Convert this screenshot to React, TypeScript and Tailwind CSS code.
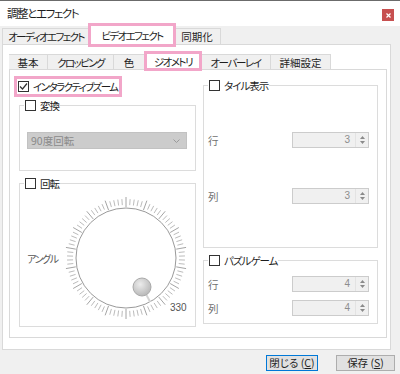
import React from "react";

const Checkbox = ({ checked = false }: { checked?: boolean }) => (
  <span className="w-[11px] h-[11px] shrink-0 border border-[#333333] bg-white flex items-center justify-center">
    {checked && (
      <svg width="9" height="9" viewBox="0 0 9 9">
        <path d="M1 4.5 L3.5 7 L8 1.5" fill="none" stroke="#333333" strokeWidth="1.2" />
      </svg>
    )}
  </span>
);

interface GroupProps {
  title: string;
  className?: string;
  children?: React.ReactNode;
}

const Group = ({ title, className = "", children }: GroupProps) => (
  <fieldset className={`border border-[#dcdcdc] p-0 m-0 min-w-0 ${className}`}>
    <legend className="ml-[4px] px-[1px] h-[11px] flex items-center gap-[4px] leading-[11px] whitespace-nowrap">
      <Checkbox />
      <span className="tracking-[-1px]">{title}</span>
    </legend>
    {children}
  </fieldset>
);

const SpinBox = ({ value }: { value: number }) => (
  <div className="w-[77px] h-[16px] border border-[#cccccc] bg-[#f0f0f0] flex">
    <span className="flex-1 text-right pr-[5px] text-[10px] leading-[14px] text-[#8d8d8d] font-['Liberation_Sans',sans-serif]">
      {value}
    </span>
    <span className="w-[13px] border-l border-[#e3e3e3] flex flex-col items-center justify-center gap-[2px]">
      <svg width="5" height="3" viewBox="0 0 5 3">
        <path d="M0 3 L2.5 0 L5 3 Z" fill="#8a8a8a" />
      </svg>
      <svg width="5" height="3" viewBox="0 0 5 3">
        <path d="M0 0 L2.5 3 L5 0 Z" fill="#8a8a8a" />
      </svg>
    </span>
  </div>
);

const SpinRow = ({ label, value, className = "" }: { label: string; value: number; className?: string }) => (
  <div className={`flex items-center justify-between pl-[4px] pr-[8px] ${className}`}>
    <span className="text-[#707070]">{label}</span>
    <SpinBox value={value} />
  </div>
);

const Dial = () => {
  const cx = 64;
  const cy = 64;
  const ticks = [];
  for (let i = 0; i < 90; i++) {
    const a = (i * 4 * Math.PI) / 180;
    const long = i % 5 === 0;
    const r1 = long ? 51 : 53;
    const r2 = long ? 61 : 59;
    ticks.push(
      <line
        key={i}
        x1={cx + r1 * Math.sin(a)}
        y1={cy - r1 * Math.cos(a)}
        x2={cx + r2 * Math.sin(a)}
        y2={cy - r2 * Math.cos(a)}
        stroke={long ? "#9a9a9a" : "#b3b3b3"}
        strokeWidth="0.9"
      />
    );
  }
  return (
    <svg width="128" height="128" viewBox="0 0 128 128" className="shrink-0">
      <defs>
        <radialGradient id="knob" cx="0.4" cy="0.35" r="0.7">
          <stop offset="0" stopColor="#ececec" />
          <stop offset="1" stopColor="#b5b5b5" />
        </radialGradient>
      </defs>
      {ticks}
      <circle cx={cx} cy={cy} r="50" fill="white" stroke="#9a9a9a" strokeWidth="1" />
      <line x1="84.4" y1="100.9" x2="88.2" y2="108" stroke="#d4d4d4" strokeWidth="2" />
      <circle cx="80" cy="93" r="9" fill="url(#knob)" stroke="#a9a9a9" strokeWidth="1" />
      <text x="108" y="117" fontSize="10" fill="#555555" fontFamily="Liberation Sans, sans-serif">
        330
      </text>
    </svg>
  );
};

const tab =
  "h-[15px] border border-b-0 border-l-0 border-[#d9d9d9] bg-[#f0f0f0] flex items-center justify-center whitespace-nowrap";

const App = () => {
  return (
    <div className="w-[400px] h-[374px] overflow-hidden bg-[#f0f0f0] flex flex-col text-[10.5px] leading-[13px] text-[#1e1e1e] font-['Noto_Sans_CJK_JP',sans-serif] [font-feature-settings:'palt']">
      {/* title bar */}
      <div className="h-[26px] shrink-0 bg-white border-t border-[#6b6b6b] flex items-center pl-[7px] pr-[6px]">
        <span className="text-[11.5px] leading-none tracking-[-1.4px] whitespace-nowrap">調整とエフェクト</span>
        <div className="ml-auto self-start mt-[8px] w-[12px] h-[12px] bg-[#c75050] flex items-center justify-center">
          <svg width="5" height="5" viewBox="0 0 5 5">
            <path d="M0.5 0.5 L4.5 4.5 M4.5 0.5 L0.5 4.5" stroke="white" strokeWidth="1.2" />
          </svg>
        </div>
      </div>

      {/* outer tabs */}
      <div className="h-[18px] shrink-0 flex items-end pl-[2px]">
        <div className="w-[88px] h-[16px] border border-b-0 border-[#d9d9d9] bg-[#f0f0f0] flex items-center justify-center whitespace-nowrap tracking-[-1.6px]">
          オーディオエフェクト
        </div>
        <div className="relative z-10 w-[84px] h-[20px] -mb-px bg-white border border-b-0 border-[#d9d9d9] outline-3 outline-[#f2a6c9] -outline-offset-1 flex items-center justify-center whitespace-nowrap tracking-[-1.6px]">
          ビデオエフェクト
        </div>
        <div className="w-[47px] h-[16px] border border-b-0 border-l-0 border-[#d9d9d9] bg-[#f0f0f0] flex items-center justify-center whitespace-nowrap">
          同期化
        </div>
      </div>

      {/* outer panel */}
      <div className="ml-[2px] w-[389px] h-[306px] shrink-0 border border-[#d9d9d9] bg-white pt-[8px] pl-[6px]">
        {/* inner tabs */}
        <div className="h-[16px] flex items-end">
          <div className={`w-[39px] border-l ${tab}`}>基本</div>
          <div className={`w-[66px] tracking-[-1.6px] ${tab}`}>クロッピング</div>
          <div className={`w-[31px] ${tab}`}>色</div>
          <div className="relative z-10 w-[56px] h-[18px] -mb-px bg-white border border-b-0 border-[#d9d9d9] outline-3 outline-[#f2a6c9] -outline-offset-2 flex items-center justify-center whitespace-nowrap tracking-[-1.6px]">
            ジオメトリ
          </div>
          <div className={`w-[70px] tracking-[-1.4px] ${tab}`}>オーバーレイ</div>
          <div className={`w-[60px] ${tab}`}>詳細設定</div>
        </div>

        {/* inner panel */}
        <div className="w-[378px] h-[269px] border border-[#d9d9d9] bg-white pl-[9px] grid grid-cols-[177px_175px] gap-x-[7px] items-start">
          {/* left column */}
          <div className="flex flex-col">
            <div className="relative z-10 mt-[9px] -ml-[2px] w-[102px] h-[15px] pl-[1px] flex items-center gap-[4px] outline-3 outline-[#f2a6c9] outline-offset-0 whitespace-nowrap">
              <Checkbox checked />
              <span className="tracking-[-1.6px]">インタラクティブズーム</span>
            </div>

            <Group title="変換" className="mt-[6px] h-[71px]">
              <div className="ml-[7px] mt-[21px] w-[160px] h-[17px] bg-[#cccccc] border border-[#c2c2c2] flex items-center pl-[3px] pr-[6px] text-[#8a8a8a] whitespace-nowrap">
                <span className="flex-1">90度回転</span>
                <svg width="7" height="4" viewBox="0 0 7 4">
                  <path d="M0.5 0.5 L3.5 3.5 L6.5 0.5" fill="none" stroke="#9a9a9a" strokeWidth="1" />
                </svg>
              </div>
            </Group>

            <Group title="回転" className="mt-[7px] h-[149px]">
              <div className="mt-[5px] flex items-center">
                <span className="ml-[7px] w-[35px] text-[10px] text-[#555555] whitespace-nowrap tracking-[-1.4px]">
                  アングル
                </span>
                <Dial />
              </div>
            </Group>
          </div>

          {/* right column */}
          <div className="flex flex-col">
            <Group title="タイル表示" className="mt-[10px] h-[168px]">
              <SpinRow label="行" value={3} className="mt-[41px]" />
              <SpinRow label="列" value={3} className="mt-[40px]" />
            </Group>

            <Group title="パズルゲーム" className="mt-[7px] h-[69px]">
              <SpinRow label="行" value={4} className="mt-[10px]" />
              <SpinRow label="列" value={4} className="mt-[8px]" />
            </Group>
          </div>
        </div>
      </div>

      {/* buttons */}
      <div className="flex-1 flex justify-end items-start pt-[5px] pr-[5px] gap-[18px]">
        <button className="w-[52px] h-[16px] border border-[#0078d7] bg-[#e1e1e1] flex items-center justify-center leading-none whitespace-nowrap">
          閉じる (<span className="underline">C</span>)
        </button>
        <button className="w-[59px] h-[16px] border border-[#adadad] bg-[#e1e1e1] flex items-center justify-center leading-none whitespace-nowrap">
          保存 (<span className="underline">S</span>)
        </button>
      </div>
    </div>
  );
};

export default App;
